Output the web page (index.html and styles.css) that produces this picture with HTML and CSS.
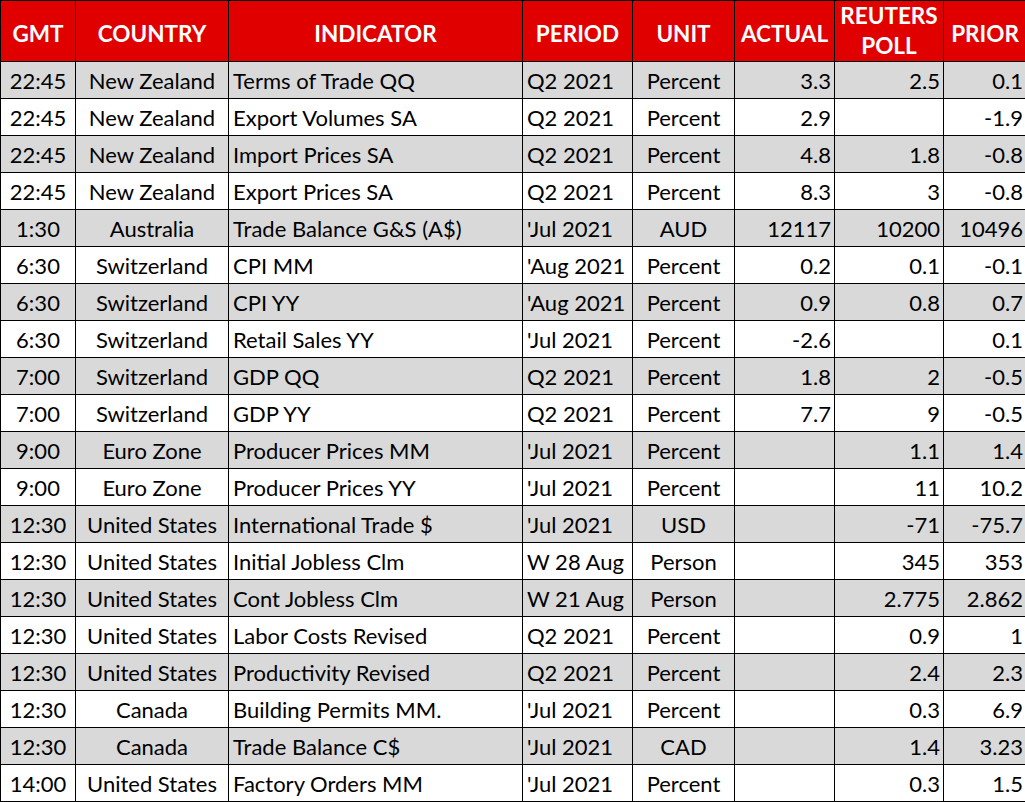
FILE: index.html
```html
<!DOCTYPE html>
<html>
<head>
<meta charset="utf-8">
<link rel="stylesheet" href="styles.css">
</head>
<body>
<table class="cal">
<colgroup>
<col class="c-gmt"><col class="c-country"><col class="c-ind"><col class="c-period"><col class="c-unit"><col class="c-actual"><col class="c-poll"><col class="c-prior">
</colgroup>
<thead>
<tr><th>GMT</th><th>COUNTRY</th><th>INDICATOR</th><th>PERIOD</th><th>UNIT</th><th>ACTUAL</th><th class="two">REUTERS<br>POLL</th><th>PRIOR</th></tr>
</thead>
<tbody>
<tr class="g"><td class="c">22:45</td><td class="c">New Zealand</td><td>Terms of Trade QQ</td><td>Q2 2021</td><td class="c">Percent</td><td class="r">3.3</td><td class="r">2.5</td><td class="r">0.1</td></tr>
<tr><td class="c">22:45</td><td class="c">New Zealand</td><td>Export Volumes SA</td><td>Q2 2021</td><td class="c">Percent</td><td class="r">2.9</td><td class="r"></td><td class="r">-1.9</td></tr>
<tr class="g"><td class="c">22:45</td><td class="c">New Zealand</td><td>Import Prices SA</td><td>Q2 2021</td><td class="c">Percent</td><td class="r">4.8</td><td class="r">1.8</td><td class="r">-0.8</td></tr>
<tr><td class="c">22:45</td><td class="c">New Zealand</td><td>Export Prices SA</td><td>Q2 2021</td><td class="c">Percent</td><td class="r">8.3</td><td class="r">3</td><td class="r">-0.8</td></tr>
<tr class="g"><td class="c">1:30</td><td class="c">Australia</td><td>Trade Balance G&amp;S (A$)</td><td>'Jul 2021</td><td class="c">AUD</td><td class="r">12117</td><td class="r">10200</td><td class="r">10496</td></tr>
<tr><td class="c">6:30</td><td class="c">Switzerland</td><td>CPI MM</td><td>'Aug 2021</td><td class="c">Percent</td><td class="r">0.2</td><td class="r">0.1</td><td class="r">-0.1</td></tr>
<tr class="g"><td class="c">6:30</td><td class="c">Switzerland</td><td>CPI YY</td><td>'Aug 2021</td><td class="c">Percent</td><td class="r">0.9</td><td class="r">0.8</td><td class="r">0.7</td></tr>
<tr><td class="c">6:30</td><td class="c">Switzerland</td><td>Retail Sales YY</td><td>'Jul 2021</td><td class="c">Percent</td><td class="r">-2.6</td><td class="r"></td><td class="r">0.1</td></tr>
<tr class="g"><td class="c">7:00</td><td class="c">Switzerland</td><td>GDP QQ</td><td>Q2 2021</td><td class="c">Percent</td><td class="r">1.8</td><td class="r">2</td><td class="r">-0.5</td></tr>
<tr><td class="c">7:00</td><td class="c">Switzerland</td><td>GDP YY</td><td>Q2 2021</td><td class="c">Percent</td><td class="r">7.7</td><td class="r">9</td><td class="r">-0.5</td></tr>
<tr class="g"><td class="c">9:00</td><td class="c">Euro Zone</td><td>Producer Prices MM</td><td>'Jul 2021</td><td class="c">Percent</td><td class="r"></td><td class="r">1.1</td><td class="r">1.4</td></tr>
<tr><td class="c">9:00</td><td class="c">Euro Zone</td><td>Producer Prices YY</td><td>'Jul 2021</td><td class="c">Percent</td><td class="r"></td><td class="r">11</td><td class="r">10.2</td></tr>
<tr class="g"><td class="c">12:30</td><td class="c">United States</td><td>International Trade $</td><td>'Jul 2021</td><td class="c">USD</td><td class="r"></td><td class="r">-71</td><td class="r">-75.7</td></tr>
<tr><td class="c">12:30</td><td class="c">United States</td><td>Initial Jobless Clm</td><td>W 28 Aug</td><td class="c">Person</td><td class="r"></td><td class="r">345</td><td class="r">353</td></tr>
<tr class="g"><td class="c">12:30</td><td class="c">United States</td><td>Cont Jobless Clm</td><td>W 21 Aug</td><td class="c">Person</td><td class="r"></td><td class="r">2.775</td><td class="r">2.862</td></tr>
<tr><td class="c">12:30</td><td class="c">United States</td><td>Labor Costs Revised</td><td>Q2 2021</td><td class="c">Percent</td><td class="r"></td><td class="r">0.9</td><td class="r">1</td></tr>
<tr class="g"><td class="c">12:30</td><td class="c">United States</td><td>Productivity Revised</td><td>Q2 2021</td><td class="c">Percent</td><td class="r"></td><td class="r">2.4</td><td class="r">2.3</td></tr>
<tr><td class="c">12:30</td><td class="c">Canada</td><td>Building Permits MM.</td><td>'Jul 2021</td><td class="c">Percent</td><td class="r"></td><td class="r">0.3</td><td class="r">6.9</td></tr>
<tr class="g"><td class="c">12:30</td><td class="c">Canada</td><td>Trade Balance C$</td><td>'Jul 2021</td><td class="c">CAD</td><td class="r"></td><td class="r">1.4</td><td class="r">3.23</td></tr>
<tr><td class="c">14:00</td><td class="c">United States</td><td>Factory Orders MM</td><td>'Jul 2021</td><td class="c">Percent</td><td class="r"></td><td class="r">0.3</td><td class="r">1.5</td></tr>
</tbody>
</table>
</body>
</html>
```
FILE: styles.css
```css
html, body {
  margin: 0;
  padding: 0;
  background: #ffffff;
}
.cal {
  border-collapse: collapse;
  table-layout: fixed;
  width: 1026px;
  font-family: Lato, "Liberation Sans", sans-serif;
  font-size: 22px;
  color: #000;
}
.c-gmt { width: 75px; }
.c-country { width: 153px; }
.c-ind { width: 294px; }
.c-period { width: 110px; }
.c-unit { width: 102px; }
.c-actual { width: 100px; }
.c-poll { width: 109px; }
.c-prior { width: 83px; }
.cal th, .cal td {
  border: 1px solid #000;
  white-space: nowrap;
  overflow: hidden;
}
.cal th {
  background: #e00000;
  color: #fff;
  font-weight: 700;
  font-size: 22.5px;
  height: 54px;
  padding: 6px 1px 0;
  text-align: center;
  vertical-align: middle;
  line-height: 28px;
}
.cal th.two {
  height: 60px;
  padding: 0 1px;
  line-height: 30px;
}
.cal td {
  height: 35px;
  padding: 1px 4px 0;
  vertical-align: middle;
  text-align: left;
  line-height: 34px;
}
.cal tr.g td {
  background: #d9d9d9;
}
.cal td.c { text-align: center; }
.cal td.r { text-align: right; padding-right: 3px; }
```
